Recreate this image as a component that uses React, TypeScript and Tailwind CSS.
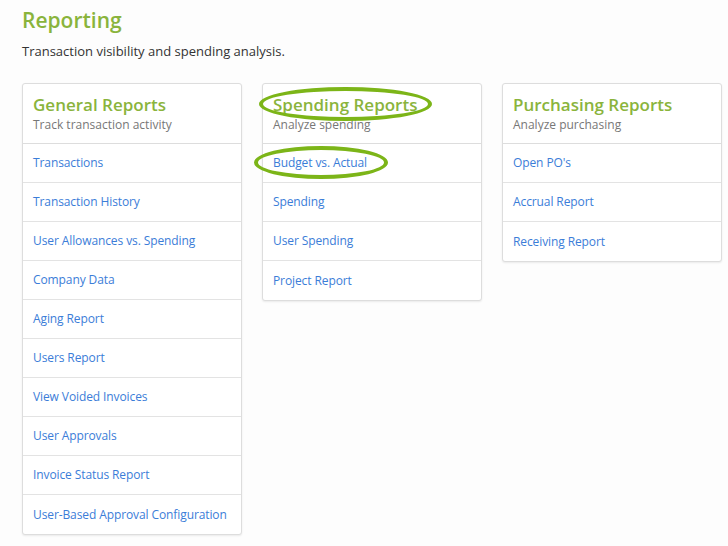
const cards = [
  {
    title: "General Reports",
    sub: "Track transaction activity",
    items: [
      "Transactions",
      "Transaction History",
      "User Allowances vs. Spending",
      "Company Data",
      "Aging Report",
      "Users Report",
      "View Voided Invoices",
      "User Approvals",
      "Invoice Status Report",
      "User-Based Approval Configuration",
    ],
  },
  {
    title: "Spending Reports",
    sub: "Analyze spending",
    items: ["Budget vs. Actual", "Spending", "User Spending", "Project Report"],
  },
  {
    title: "Purchasing Reports",
    sub: "Analyze purchasing",
    items: ["Open PO's", "Accrual Report", "Receiving Report"],
  },
];

export default function App() {
  return (
    <div
      className="relative h-[546px] w-[728px] overflow-hidden bg-[#fdfdfd] pl-[22px] pt-[6px] text-[#333]"
      style={{ fontFamily: '"Open Sans", sans-serif' }}
    >
      <h1 className="text-[21px] font-semibold leading-[28px] text-[#8ab43c]">Reporting</h1>
      <p className="mt-[8px] text-[13px] leading-[18px]">Transaction visibility and spending analysis.</p>
      <div className="mt-[23px] flex items-start gap-[20px]">
        {cards.map((c) => (
          <div key={c.title} className="w-[220px] shrink-0 rounded-[3px] border border-[#ddd] bg-white shadow-[0_1px_2px_rgba(0,0,0,0.08)]">
            <div className="h-[60px] border-b border-[#ddd] px-[10px] pt-[10px]">
              <div className="text-[17px] font-semibold leading-[22px] text-[#8ab43c]">{c.title}</div>
              <div className="text-[12px] leading-[17px] text-[#777]">{c.sub}</div>
            </div>
            {c.items.map((it, i) => (
              <div
                key={it}
                className={`flex h-[39px] items-center whitespace-nowrap px-[10px] text-[12px] tracking-[-0.1px] text-[#3b7dd8] ${i < c.items.length - 1 ? "border-b border-[#e3e3e3]" : ""}`}
              >
                {it}
              </div>
            ))}
          </div>
        ))}
      </div>
      <div className="pointer-events-none absolute left-[259px] top-[87px] h-[34px] w-[173px] rounded-[50%] border-[4px] border-[#7cb518]" />
      <div className="pointer-events-none absolute left-[254px] top-[146px] h-[33px] w-[134px] rounded-[50%] border-[4px] border-[#7cb518]" />
    </div>
  );
}
